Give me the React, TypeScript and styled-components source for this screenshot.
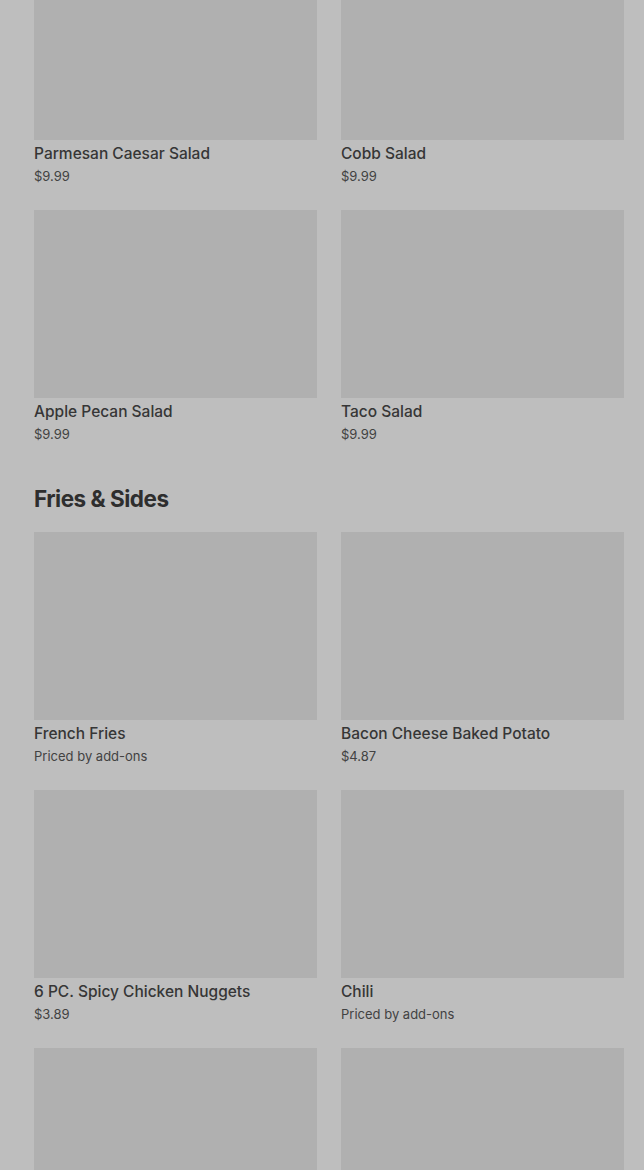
import React from 'react';
import styled, { createGlobalStyle } from 'styled-components';

const GlobalStyle = createGlobalStyle`
  html, body {
    margin: 0;
    padding: 0;
    background: #bebebe;
    overflow: hidden;
  }
  body {
    font-family: Inter, "Noto Sans", Roboto, sans-serif;
    color: #333333;
  }
`;

const Page = styled.main`
  margin-top: -48px;
  padding: 0 20px 0 34px;
`;

const Section = styled.section`
  & + & {
    margin-top: 37px;
  }
`;

const SectionTitle = styled.h2`
  margin: 0 0 17px;
  font-size: 22.5px;
  line-height: 32px;
  font-weight: 700;
  letter-spacing: -0.5px;
  color: #2e2e2e;
`;

const Grid = styled.div`
  display: grid;
  grid-template-columns: 283px 283px;
  column-gap: 24px;
  row-gap: 22px;
`;

const Card = styled.article`
  display: flex;
  flex-direction: column;
`;

const Thumb = styled.div`
  height: 188px;
  background: #b0b0b0;
`;

const Name = styled.h3`
  margin: 3px 0 0;
  font-size: 15.5px;
  line-height: 22px;
  font-weight: 500;
  color: #363636;
`;

const Price = styled.span`
  font-size: 13px;
  line-height: 23px;
  color: #424242;
`;

type Item = { name?: string; price?: string };

const sections: { title?: string; items: Item[] }[] = [
  {
    items: [
      { name: 'Parmesan Caesar Salad', price: '$9.99' },
      { name: 'Cobb Salad', price: '$9.99' },
      { name: 'Apple Pecan Salad', price: '$9.99' },
      { name: 'Taco Salad', price: '$9.99' },
    ],
  },
  {
    title: 'Fries & Sides',
    items: [
      { name: 'French Fries', price: 'Priced by add-ons' },
      { name: 'Bacon Cheese Baked Potato', price: '$4.87' },
      { name: '6 PC. Spicy Chicken Nuggets', price: '$3.89' },
      { name: 'Chili', price: 'Priced by add-ons' },
      {},
      {},
    ],
  },
];

export default function App() {
  return (
    <>
      <GlobalStyle />
      <Page>
        {sections.map((section, i) => (
          <Section key={i}>
            {section.title && <SectionTitle>{section.title}</SectionTitle>}
            <Grid>
              {section.items.map((item, j) => (
                <Card key={j}>
                  <Thumb />
                  {item.name && <Name>{item.name}</Name>}
                  {item.price && <Price>{item.price}</Price>}
                </Card>
              ))}
            </Grid>
          </Section>
        ))}
      </Page>
    </>
  );
}
